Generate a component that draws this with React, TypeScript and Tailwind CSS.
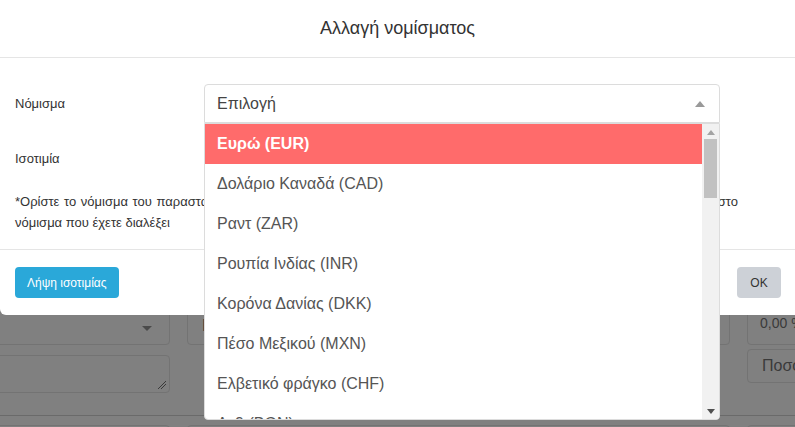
import React from "react";

const items = [
  "Ευρώ (EUR)",
  "Δολάριο Καναδά (CAD)",
  "Ραντ (ZAR)",
  "Ρουπία Ινδίας (INR)",
  "Κορόνα Δανίας (DKK)",
  "Πέσο Μεξικού (MXN)",
  "Ελβετικό φράγκο (CHF)",
  "Λεβ (BGN)",
  "Κορόνα Σουηδίας (SEK)",
];

export default function App() {
  return (
    <div
      className="relative w-[795px] h-[427px] overflow-hidden bg-[#808080]"
      style={{ fontFamily: '"Liberation Sans", Arial, sans-serif' }}
    >
      {/* Modal */}
      <div className="relative z-10 w-[820px] h-[315px] bg-white rounded-b-[6px] flex flex-col">
        <div className="h-[58px] w-[795px] border-b border-[#e5e5e5] flex items-center justify-center">
          <span className="text-[18px] text-[#333]">Αλλαγή νομίσματος</span>
        </div>
        <div className="h-[192px] border-b border-[#e5e5e5] px-[15px] pt-[26px] text-[13px] text-[#333]">
          <div className="flex items-center h-[39px]">
            <span className="w-[189px]">Νόμισμα</span>
            <div className="relative w-[516px] h-[39px] border border-[#dcdcdc] rounded-t-[4px] flex items-center pl-[12px] text-[16px] text-[#444]">
              Επιλογή
              <svg className="absolute right-[14px] top-[16px]" width="10" height="6" viewBox="0 0 10 6">
                <path d="M0 6 L5 0 L10 6 Z" fill="#999" />
              </svg>
              {/* Dropdown */}
              <div className="absolute left-[-1px] top-[38px] w-[516px] h-[297px] bg-white border border-[#dcdcdc] rounded-b-[4px] flex overflow-hidden">
                <div className="flex-1 flex flex-col">
                  {items.map((t, i) => (
                    <div
                      key={t}
                      className={
                        i === 0
                          ? "h-[40px] shrink-0 flex items-center pl-[12px] bg-[#ff6b6b] text-white font-bold text-[16px]"
                          : "h-[40px] shrink-0 flex items-center pl-[12px] text-[#555] text-[16px]"
                      }
                    >
                      {t}
                    </div>
                  ))}
                </div>
                <div className="w-[17px] bg-[#f1f1f1] flex flex-col items-center">
                  <svg className="mt-[6px]" width="8" height="5" viewBox="0 0 8 5">
                    <path d="M0 5 L4 0 L8 5 Z" fill="#a3a3a3" />
                  </svg>
                  <div className="mt-[4px] w-[13px] h-[59px] bg-[#c1c1c1]" />
                  <div className="flex-1" />
                  <svg className="mb-[5px]" width="8" height="5" viewBox="0 0 8 5">
                    <path d="M0 0 L4 5 L8 0 Z" fill="#505050" />
                  </svg>
                </div>
              </div>
            </div>
          </div>
          <div className="mt-[26px] h-[20px] flex items-center">Ισοτιμία</div>
          <div className="mt-[22px] leading-[21px]">
            <div className="w-[723px] [text-align-last:justify]">
              *Ορίστε το νόμισμα του παραστατικού και την ισοτιμία του σε σχέση με το νόμισμα της εταιρείας, αν διαφέρει από αυτό στο
            </div>
            <div>νόμισμα που έχετε διαλέξει</div>
          </div>
        </div>
        <div className="flex-1 flex items-center justify-between pl-[15px] pr-[39px]">
          <button className="h-[31px] px-[12px] rounded-[4px] bg-[#2aa8d9] text-white text-[12px]">
            Λήψη ισοτιμίας
          </button>
          <button className="h-[31px] w-[44px] rounded-[4px] bg-[#cdd1d7] text-[#333] text-[12px]">
            OK
          </button>
        </div>
      </div>

      {/* Dimmed page under overlay */}
      <div className="absolute left-0 top-[285px] w-[900px] flex flex-col text-[#3a3a3a]">
        <div className="flex gap-[17px] ml-[-30px]">
          <div className="w-[200px] shrink-0 flex flex-col gap-[10px]">
            <div className="relative h-[60px] border border-[#737373] rounded-[4px]">
              <svg className="absolute right-[17px] top-[40px]" width="10" height="5" viewBox="0 0 10 5">
                <path d="M0 0 L5 5 L10 0 Z" fill="#4a4a4a" />
              </svg>
            </div>
            <div className="relative h-[38px] border border-[#737373] rounded-[4px]">
              <svg className="absolute right-[2px] bottom-[2px]" width="10" height="10" viewBox="0 0 10 10">
                <path d="M1 9 L9 1 M4 9 L9 4" stroke="#3a3a3a" strokeWidth="1" />
              </svg>
            </div>
          </div>
          <div className="w-[543px] shrink-0 flex flex-col gap-[10px]">
            <div className="h-[60px] border border-[#737373] rounded-[4px] flex items-end pb-[6px] pl-[14px] text-[16px]">K</div>
          </div>
          <div className="w-[80px] shrink-0 flex flex-col gap-[4px]">
            <div className="h-[60px] border border-[#737373] rounded-[4px] flex items-end pb-[10px] pl-[12px] text-[14px]">0,00 %</div>
            <div className="h-[34px] border border-[#737373] rounded-[4px] flex items-center pl-[14px] text-[16px]">Ποσο</div>
          </div>
        </div>
        <div className="mt-[22px] h-[1px] bg-[#6a6a6a]" />
        <div className="mt-[9px] flex gap-[17px] ml-[-30px]">
          <div className="w-[200px] shrink-0 h-[30px] border border-[#737373] rounded-[4px]" />
          <div className="w-[543px] shrink-0 h-[30px] border border-[#737373] rounded-[4px]" />
          <div className="w-[80px] shrink-0 h-[30px] border border-[#737373] rounded-[4px]" />
        </div>
      </div>
    </div>
  );
}
